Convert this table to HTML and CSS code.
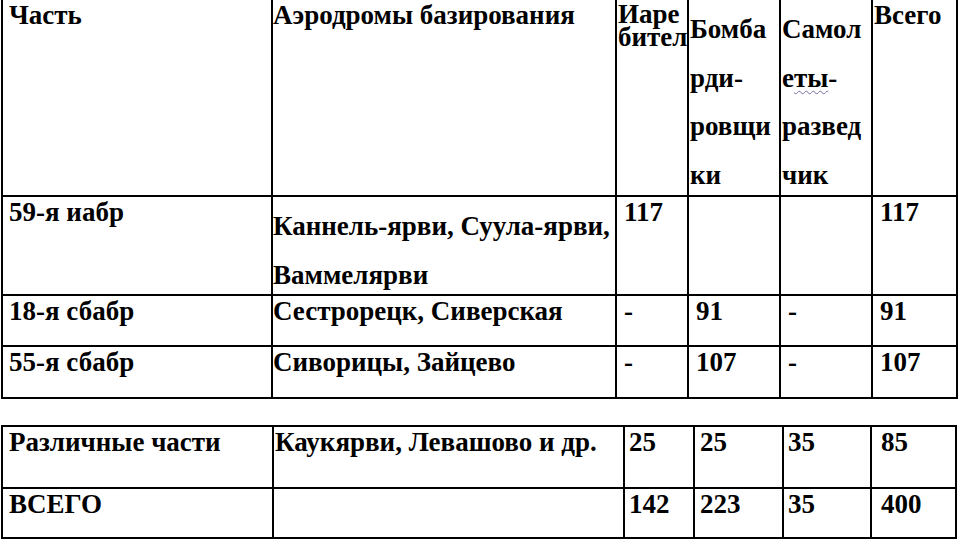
FILE: index.html
```html
<!DOCTYPE html>
<html lang="ru">
<head>
<meta charset="utf-8">
<title>Авиачасти и аэродромы базирования</title>
<link rel="stylesheet" href="styles.css">
</head>
<body>
<table class="grid main">
  <colgroup>
    <col class="c1"><col class="c2"><col class="c3"><col class="c4"><col class="c5"><col class="c6">
  </colgroup>
  <tr class="r-head">
    <th class="unit">Часть</th>
    <th class="place">Аэродромы базирования</th>
    <th class="hd"><div class="tight">Иаре<br>бител</div></th>
    <th class="hd"><div class="spaced">Бомба<br>рди-<br>ровщи<br>ки</div></th>
    <th class="hd"><div class="spaced">Самол<br>е<span class="squiggle">ты</span>-<br>развед<br>чик</div></th>
    <th class="hd">Всего</th>
  </tr>
  <tr class="r-59">
    <td class="unit">59-я иабр</td>
    <td class="place"><div class="spaced">Каннель-ярви, Суула-ярви,<br>Ваммелярви</div></td>
    <td class="num">117</td>
    <td class="num"></td>
    <td class="num"></td>
    <td class="num">117</td>
  </tr>
  <tr class="r-18">
    <td class="unit">18-я сбабр</td>
    <td class="place">Сестрорецк, Сиверская</td>
    <td class="num">-</td>
    <td class="num">91</td>
    <td class="num">-</td>
    <td class="num">91</td>
  </tr>
  <tr class="r-55">
    <td class="unit">55-я сбабр</td>
    <td class="place">Сиворицы, Зайцево</td>
    <td class="num">-</td>
    <td class="num">107</td>
    <td class="num">-</td>
    <td class="num">107</td>
  </tr>
</table>

<table class="grid totals">
  <colgroup>
    <col class="t1"><col class="t2"><col class="t3"><col class="t4"><col class="t5"><col class="t6">
  </colgroup>
  <tr class="r-misc">
    <td class="unit">Различные части</td>
    <td class="place2">Каукярви, Левашово и др.</td>
    <td class="n3">25</td>
    <td class="n4">25</td>
    <td class="n5">35</td>
    <td class="n6">85</td>
  </tr>
  <tr class="r-all">
    <td class="unit">ВСЕГО</td>
    <td class="place2"></td>
    <td class="n3">142</td>
    <td class="n4">223</td>
    <td class="n5">35</td>
    <td class="n6">400</td>
  </tr>
</table>
</body>
</html>
```

FILE: styles.css
```css
html, body {
  margin: 0;
  padding: 0;
  background: #fff;
}

body {
  font-family: "Liberation Serif", "Times New Roman", serif;
  font-weight: bold;
  font-size: 27px;
  color: #000;
  overflow: hidden;
}

.grid {
  border-collapse: collapse;
  table-layout: fixed;
  margin-left: 1px;
}

.grid th,
.grid td {
  border: 2px solid #000;
  padding: 0;
  text-align: left;
  vertical-align: top;
  font-weight: bold;
  white-space: nowrap;
  line-height: normal;
}

/* ---------- main table ---------- */
.main {
  width: 956px;
}

.main tr:first-child th {
  border-top: none;
}

.main .c1 { width: 270px; }
.main .c2 { width: 344px; }
.main .c3 { width: 72px; }
.main .c4 { width: 92px; }
.main .c5 { width: 92px; }
.main .c6 { width: 85px; }

.main .r-head th { height: 195px; }
.main .r-59 td { height: 97px; }
.main .r-18 td { height: 49px; }
.main .r-55 td { height: 50px; }

.unit { padding-left: 6px !important; }
.place { padding-left: 0; }
.hd { padding-left: 1px !important; }
.num { padding-left: 7px !important; }

.tight {
  line-height: 23px;
  padding-top: 3px;
}

.spaced {
  line-height: 48.7px;
  margin-top: 5px;
  margin-bottom: -5px;
}

.squiggle {
  text-decoration: underline wavy #6f6fa8;
  text-decoration-thickness: 1px;
  text-underline-offset: 3px;
}

/* ---------- totals table ---------- */
.totals {
  width: 954px;
  margin-top: 26px;
}

.totals .t1 { width: 271px; }
.totals .t2 { width: 351px; }
.totals .t3 { width: 70px; }
.totals .t4 { width: 89px; }
.totals .t5 { width: 88px; }
.totals .t6 { width: 85px; }

.totals .r-misc td { height: 60px; }
.totals .r-all td { height: 48px; }

.place2 { padding-left: 1px !important; }
.n3 { padding-left: 4px !important; }
.n4 { padding-left: 5px !important; }
.n5 { padding-left: 4px !important; }
.n6 { padding-left: 9px !important; }
```
